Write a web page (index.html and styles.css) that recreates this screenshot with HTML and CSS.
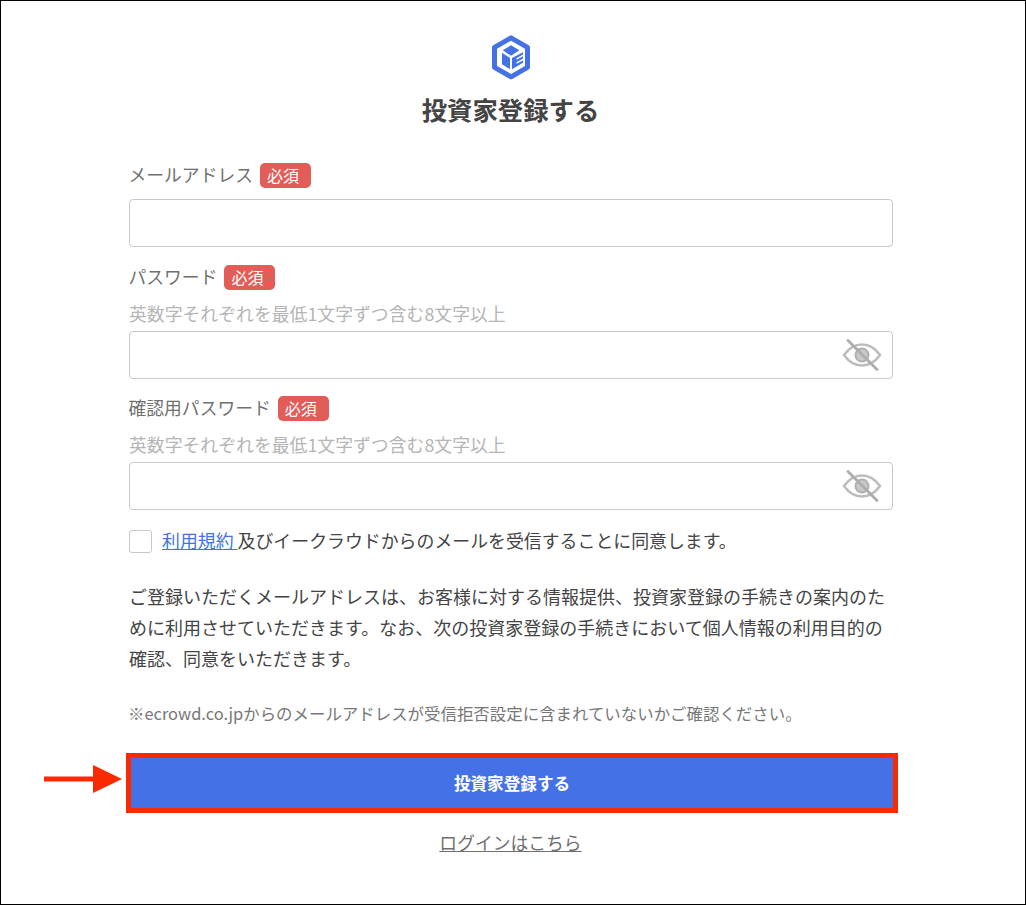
FILE: index.html
```html
<!DOCTYPE html>
<html lang="ja">
<head>
<meta charset="utf-8">
<title>投資家登録する</title>
<link rel="stylesheet" href="styles.css">
</head>
<body>
<main class="frame">
  <div class="form">
    <svg class="logo" viewBox="0 0 40 46" width="40" height="46" aria-hidden="true">
      <path d="M20 2.800 36.500 12.300v20L20 41.800 3.500 32.300v-20Z" fill="none" stroke="#4472e6" stroke-width="5" stroke-linejoin="round"/>
      <path d="M20 10.300 28.300 15.300 20 20.800 11.700 15.300Z" fill="#4472e6"/>
      <path d="M11 17.700 19 23V34.300L11 29.300Z" fill="#4472e6"/>
      <path d="M21 23 32 17.200v2.300L25.500 23.200v1.500L32 21.300v2.300L25.500 27.300v1.500L32 25.400v2.300L21 34.300Z" fill="#4472e6"/>
    </svg>
    <h1 class="title">投資家登録する</h1>

    <div class="label-row first"><span class="label">メールアドレス</span><span class="req">必須</span></div>
    <div class="input"></div>

    <div class="label-row second"><span class="label">パスワード</span><span class="req">必須</span></div>
    <p class="hint">英数字それぞれを最低1文字ずつ含む8文字以上</p>
    <div class="input">
      <svg class="eye" viewBox="0 0 40 32" width="40" height="32" aria-hidden="true">
        <path d="M2 16C7 9 13 5.500 20 5.500S33 9 38 16c-5 7-11 10.500-18 10.500S7 23 2 16Z" fill="none" stroke="#bcbcbc" stroke-width="2.500"/>
        <circle cx="20" cy="16" r="6.500" fill="#c8c8c8" stroke="#b0b0b0" stroke-width="2"/>
        <path d="M6 1.500 35 30.500" stroke="#adadad" stroke-width="2.800" stroke-linecap="round"/>
      </svg>
    </div>

    <div class="label-row third"><span class="label">確認用パスワード</span><span class="req">必須</span></div>
    <p class="hint">英数字それぞれを最低1文字ずつ含む8文字以上</p>
    <div class="input">
      <svg class="eye" viewBox="0 0 40 32" width="40" height="32" aria-hidden="true">
        <path d="M2 16C7 9 13 5.500 20 5.500S33 9 38 16c-5 7-11 10.500-18 10.500S7 23 2 16Z" fill="none" stroke="#bcbcbc" stroke-width="2.500"/>
        <circle cx="20" cy="16" r="6.500" fill="#c8c8c8" stroke="#b0b0b0" stroke-width="2"/>
        <path d="M6 1.500 35 30.500" stroke="#adadad" stroke-width="2.800" stroke-linecap="round"/>
      </svg>
    </div>

    <div class="agree">
      <span class="check"></span>
      <p class="agree-text"><a class="terms" href="#">利用規約 </a>及びイークラウドからのメールを受信することに同意します。</p>
    </div>

    <p class="notice">ご登録いただくメールアドレスは、お客様に対する情報提供、投資家登録の手続きの案内のために利用させていただきます。なお、次の投資家登録の手続きにおいて個人情報の利用目的の確認、同意をいただきます。</p>
    <p class="small">※ecrowd.co.jpからのメールアドレスが受信拒否設定に含まれていないかご確認ください。</p>

    <div class="cta">
      <svg class="arrow" viewBox="0 0 78 28" width="78" height="28" aria-hidden="true">
        <path d="M0 11.500h49V0l29 14-29 14V16.500H0Z" fill="#fa2a00"/>
      </svg>
      <button class="submit" type="button">投資家登録する</button>
    </div>
    <a class="login" href="#">ログインはこちら</a>
  </div>
</main>
</body>
</html>
```
FILE: styles.css
```css
* { box-sizing: border-box; }
html, body { margin: 0; padding: 0; }
body {
  font-family: "Noto Sans CJK JP", "Noto Sans", sans-serif;
  background: #fff;
  color: #444;
}
.frame {
  width: 1026px;
  height: 905px;
  border: 1px solid #000;
  padding-top: 34px;
  overflow: hidden;
}
.form {
  width: 764px;
  margin-left: 128px;
  display: flex;
  flex-direction: column;
}
.logo { align-self: center; display: block; }
.title {
  margin: 10px 0 0;
  font-size: 25.400px;
  line-height: 36px;
  font-weight: 700;
  text-align: center;
  color: #444;
  margin-left: -1px;
}
.label-row {
  display: flex;
  align-items: center;
  height: 26px;
  gap: 7px;
  margin-left: -0.500px;
}
.first { margin-top: 35px; }
.second { margin-top: 17px; }
.third { margin-top: 16px; }
.label { font-size: 17.800px; color: #707070; margin-bottom: 2px; }
.req {
  background: #e25c58;
  color: #fff;
  font-size: 16px;
  line-height: 25px;
  height: 25px;
  width: 51px;
  padding-left: 7px;
  border-radius: 5px;
}
.input {
  height: 48px;
  margin-top: 11px;
  border: 1px solid #c8c8c8;
  border-radius: 4px;
  position: relative;
  display: flex;
  align-items: center;
  justify-content: flex-end;
  padding-right: 10px;
}
.hint {
  margin: 11px 0 -5px;
  font-size: 17.850px;
  line-height: 24px;
  color: #b5b5b5;
}
.agree {
  display: flex;
  align-items: center;
  gap: 10px;
  margin-top: 16px;
}
.check {
  flex: none;
  width: 23px;
  height: 23px;
  border: 1px solid #c8c8c8;
  border-radius: 3px;
  margin-top: 4px;
}
.agree-text { margin: 0; font-size: 17.900px; line-height: 24px; color: #444; }
.terms { color: #4472e6; }
.notice {
  margin: 28px 0 0;
  font-size: 18px;
  line-height: 31px;
  color: #444;
}
.small {
  margin: 27px 0 0 -1px;
  font-size: 16.450px;
  line-height: 24px;
  color: #777;
}
.cta { position: relative; margin-top: 28px; }
.arrow { position: absolute; left: -85px; top: 12px; }
.submit {
  display: block;
  width: 772px;
  height: 60px;
  margin-left: -3px;
  background: #4472e6;
  border: 5.500px solid #fa2a00;
  color: #fff;
  font: 700 16.600px "Noto Sans CJK JP", "Noto Sans", sans-serif;
}
.login {
  align-self: center;
  margin-top: 16px;
  font-size: 17.800px;
  line-height: 26px;
  color: #707070;
  margin-left: -1px;
}
```
